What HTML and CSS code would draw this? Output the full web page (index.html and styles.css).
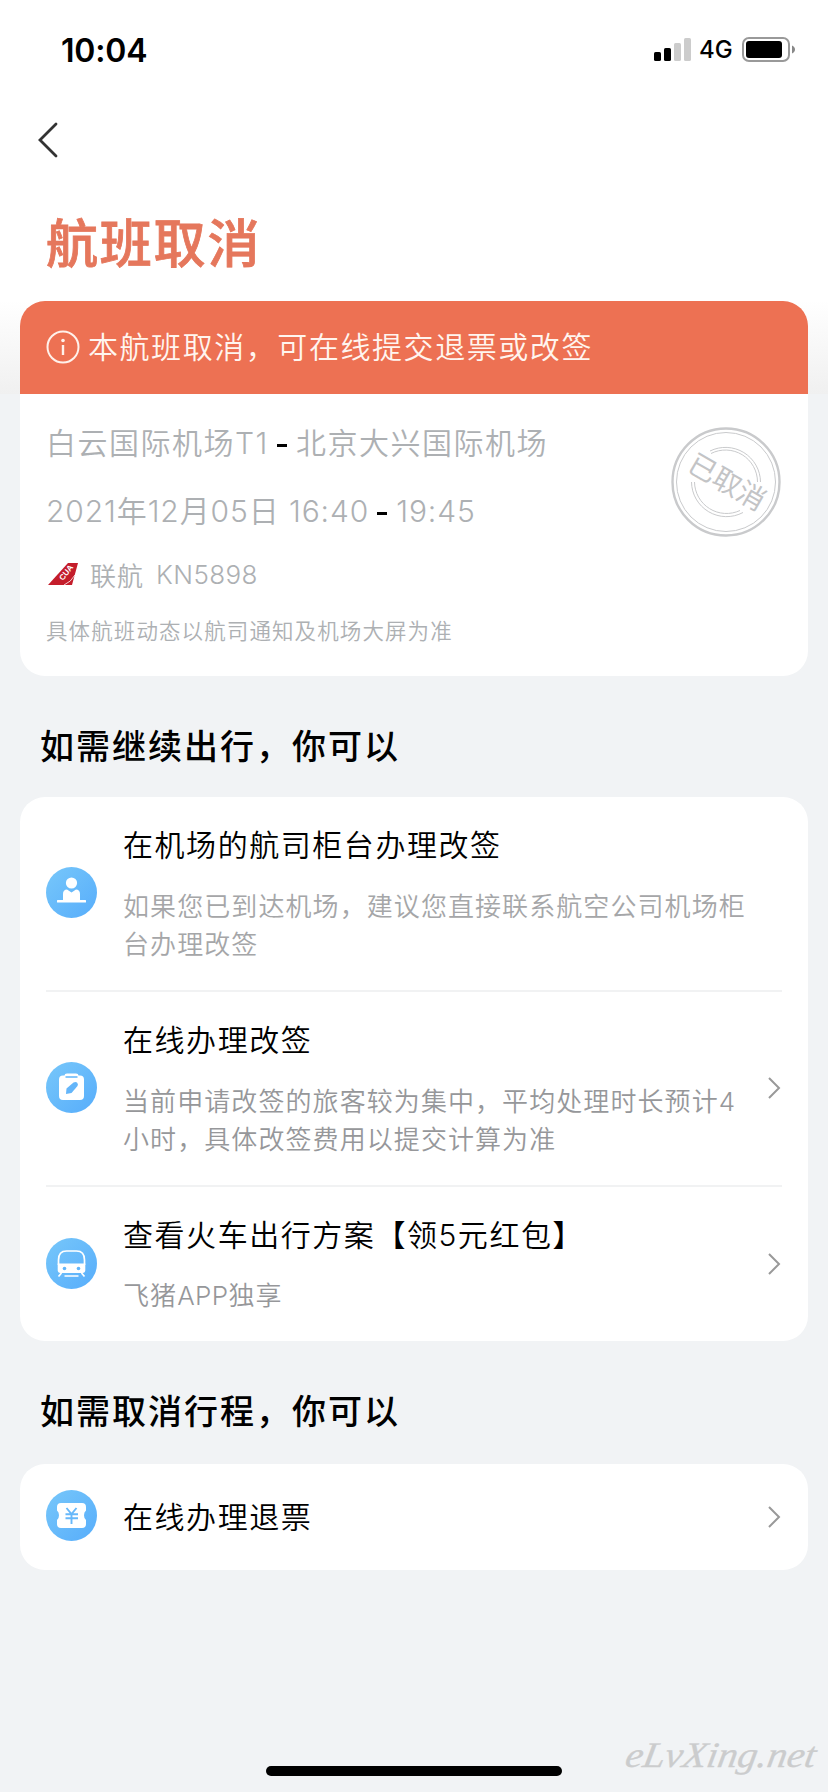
FILE: index.html
```html
<!DOCTYPE html>
<html lang="zh-CN">
<head>
<meta charset="utf-8">
<title>航班取消</title>
<link rel="stylesheet" href="styles.css">
</head>
<body>
<svg class="defs" width="0" height="0" aria-hidden="true">
  <defs>
    <linearGradient id="sky" x1="0" y1="0" x2="1" y2="1">
      <stop offset="0" stop-color="#77c7fa"/><stop offset="1" stop-color="#57adfb"/>
    </linearGradient>
    <symbol id="chevron" viewBox="0 0 14 24"><path d="M2 2 L12 12 L2 22" fill="none" stroke="#999" stroke-width="2"/></symbol>
  </defs>
</svg>
<div class="screen">
  <header class="top">
    <div class="status">
      <span class="clock">10:04</span>
      <div class="status-right">
        <svg class="signal" width="37" height="23" viewBox="0 0 37 23">
          <rect x="0" y="14" width="7" height="9" rx="1.6"/><rect x="10" y="10" width="7" height="13" rx="1.6"/>
          <g fill="#ccc"><rect x="20" y="5" width="7" height="18" rx="1.6"/><rect x="30" y="0" width="7" height="23" rx="1.6"/></g>
        </svg>
        <span class="network">4G</span>
        <svg class="battery" width="53" height="25" viewBox="0 0 53 25">
          <rect x="1" y="1" width="46" height="23" rx="6" fill="none" stroke="#999" stroke-width="2"/>
          <rect x="4" y="4" width="36" height="17" rx="3"/>
          <path d="M50 8.500c4 1.500 4 6.500 0 8z" fill="#888"/>
        </svg>
      </div>
    </div>
    <nav class="nav">
      <svg width="22" height="38" viewBox="0 0 22 38"><path d="M19 3 L3 19 L19 35" fill="none" stroke="#333" stroke-width="2.800" stroke-linecap="round"/></svg>
    </nav>
    <h1 class="page-title">航班取消</h1>
  </header>

  <main class="content">
    <section class="card flight">
      <div class="banner">
        <svg width="34" height="34" viewBox="0 0 34 34"><circle cx="17" cy="17" r="15.500" fill="none" stroke="#fff1eb" stroke-width="2"/><circle cx="17" cy="10.500" r="1.800" fill="#fff1eb"/><path d="M17 15v10" stroke="#fff1eb" stroke-width="2.400"/></svg>
        <span>本航班取消，可在线提交退票或改签</span>
      </div>
      <div class="flight-body">
        <div class="flight-info">
          <p class="route">白云国际机场T1<b class="dash"></b>北京大兴国际机场</p>
          <p class="time">2021年12月05日 <span>16:40</span><b class="dash"></b><span>19:45</span></p>
          <p class="carrier">
            <svg width="32" height="24" viewBox="0 0 32 24"><path d="M2 23L22 1H32L26 23Z" fill="#c41d2b"/><path d="M18 23Q25 20 29 13" fill="none" stroke="#fff" stroke-width=".8"/><text class="logo-text" x="0" y="0" transform="translate(17 19) rotate(-52)">CUA</text></svg>
            <span class="airline">联航</span><span class="number">KN5898</span>
          </p>
          <p class="note">具体航班动态以航司通知及机场大屏为准</p>
        </div>
        <svg class="stamp" width="110" height="110" viewBox="-55 -55 110 110">
          <g fill="none" stroke="#c9cacc">
            <circle r="53.500" stroke-width="2.400"/><circle r="49.500" stroke-width="1"/>
            <path d="M-16 -31A35 35 0 0 1 34.500 0M-15 -28.500A32 32 0 0 1 31.500 0M-34.500 0A35 35 0 0 0 17 30.500M-31.500 0A32 32 0 0 0 14 28.500" stroke-width="1"/>
          </g>
          <text class="stamp-text" transform="translate(1 0) rotate(30)" x="0" y="10" text-anchor="middle">已取消</text>
        </svg>
      </div>
    </section>

    <h2 class="section-title">如需继续出行，你可以</h2>
    <section class="card">
      <div class="item">
        <svg class="icon" viewBox="0 0 51 51"><circle cx="25.500" cy="25.500" r="25.500" fill="url(#sky)"/><g fill="#fff"><circle cx="25.500" cy="16" r="5.600"/><path d="M17 33v-6c0-3 1.500-4.500 4-4.500l4.500 3 4.500-3c2.500 0 4 1.500 4 4.500v6z"/><rect x="11" y="33" width="29" height="2.500" rx=".6"/></g></svg>
        <div class="item-text"><h3>在机场的航司柜台办理改签</h3><p class="first">如果您已到达机场，建议您直接联系航空公司机场柜台办理改签</p></div>
      </div>
      <div class="item">
        <svg class="icon" viewBox="0 0 51 51"><circle cx="25.500" cy="25.500" r="25.500" fill="url(#sky)"/><path d="M17 13.500h1.500q0-2 2.500-2h9q2.500 0 2.500 2H34q4 0 4 4V34q0 4-4 4H17q-4 0-4-4V17.500q0-4 4-4z" fill="#fff"/><path d="M19.500 15h12" stroke="#68b9fa" stroke-width="1.600"/><path d="M20 32l.5-5.500L27.500 20.500q2-1 3.500 0 1.600 1.500.5 3.500L25.500 31z" fill="#64b6fa"/></svg>
        <div class="item-text"><h3>在线办理改签</h3><p>当前申请改签的旅客较为集中，平均处理时长预计4<br>小时，具体改签费用以提交计算为准</p></div>
        <svg class="arrow"><use href="#chevron"/></svg>
      </div>
      <div class="item last">
        <svg class="icon" viewBox="0 0 51 51"><circle cx="25.500" cy="25.500" r="25.500" fill="url(#sky)"/><path d="M12.500 27V22q0-9 8-9h10q8 0 8 9v5" fill="none" stroke="#fff" stroke-width="1.700"/><path d="M11.700 25.500H39.300V32q0 3-3 3H14.700q-3 0-3-3z" fill="#fff"/><g fill="#62b5fa"><circle cx="18.500" cy="30.500" r="1.800"/><circle cx="32.500" cy="30.500" r="1.800"/></g><path d="M15.500 35l-3 3.500M35.500 35l3 3.500M18.500 38h14" fill="none" stroke="#fff" stroke-width="1.700"/></svg>
        <div class="item-text short"><h3>查看火车出行方案【领5元红包】</h3><p>飞猪<span class="latin">APP</span>独享</p></div>
        <svg class="arrow"><use href="#chevron"/></svg>
      </div>
    </section>

    <h2 class="section-title second">如需取消行程，你可以</h2>
    <section class="card">
      <div class="item single">
        <svg class="icon" viewBox="0 0 51 51"><circle cx="25.500" cy="25.500" r="25.500" fill="url(#sky)"/><path d="M15 13H36q4 0 4 4v3.500q-2 1.500-2 4.800t2 4.800V34q0 4-4 4H15q-4 0-4-4v-3.900q2-1.500 2-4.800t-2-4.800V17q0-4 4-4z" fill="#fff"/><path d="M20.500 18l5 6 5-6M25.500 24v10M19.500 24.300h12.500M19.500 28.300h12.500" fill="none" stroke="#67b8fa" stroke-width="1.900"/></svg>
        <div class="item-text"><h3>在线办理退票</h3></div>
        <svg class="arrow"><use href="#chevron"/></svg>
      </div>
    </section>
  </main>
  <div class="home-indicator"></div>
  <svg class="watermark" width="206" height="54" viewBox="0 0 206 54"><text class="mark-text" transform="translate(4 34) skewX(-10)" x="0" y="0" textLength="190" lengthAdjust="spacingAndGlyphs">eLvXing.net</text></svg>
</div>
</body>
</html>
```

FILE: styles.css
```css
* { box-sizing: border-box; }
body, h1, h2, h3, p { margin: 0; }
body {
  background: #f1f3f5;
  color: #000;
  font-family: Inter, "Noto Sans CJK SC", sans-serif;
}
.defs { position: absolute; }
.screen {
  position: relative;
  width: 828px;
  height: 1792px;
  overflow: hidden;
  background: linear-gradient(#fff 300px, #f0f0f0 394px, #f1f3f5 394px);
}
svg { display: block; flex: none; }

.top { height: 301px; }
.status {
  height: 99px;
  padding: 0 33px 0 61px;
  display: flex;
  align-items: center;
  justify-content: space-between;
}
.clock { padding-top: 1px; font-size: 32px; font-weight: 600; letter-spacing: -0.2px; }
.status-right { display: flex; align-items: center; }
.network { width: 51px; padding: 1px 0 0 8px; font-size: 24px; font-weight: 500; line-height: 24px; }
.nav { height: 80px; padding: 22px 0 0 37px; }
.page-title {
  padding: 22px 0 0 46px;
  font: 500 52px/80px "Noto Sans CJK SC", sans-serif;
  letter-spacing: 1.8px;
  color: #e5775c;
  -webkit-text-stroke: 0.8px #e5775c;
}

.content { padding: 0 20px; }
.card { background: #fff; border-radius: 25px; overflow: hidden; }
.flight { height: 375px; }
.banner {
  height: 93px;
  padding: 0 0 1px 26px;
  display: flex;
  align-items: center;
  gap: 8px;
  background: #ed7153;
  color: #fff5ef;
  font-size: 30px;
  font-weight: 350;
  letter-spacing: 1.56px;
}
.banner span { padding-bottom: 4px; }
.flight-body {
  display: flex;
  justify-content: space-between;
  padding: 26px 27px 0 26px;
  color: #adb0b3;
  font-weight: 350;
}
.route, .time { font-size: 30px; line-height: 46px; letter-spacing: 1.5px; white-space: nowrap; }
.time { margin-top: 22px; letter-spacing: 0.9px; }
.dash { display: inline-block; width: 10px; height: 3px; margin: 0 9px 7px 8px; background: #000; }
.carrier { height: 40px; margin-top: 20px; display: flex; align-items: center; font-size: 26px; }
.airline { margin-left: 12px; letter-spacing: 1px; }
.number { margin-left: 12px; letter-spacing: .4px; }
.logo-text { font: 700 8px "Liberation Sans", sans-serif; fill: #fff; }
.note { margin-top: 20px; font-size: 21.5px; line-height: 34px; letter-spacing: 1.1px; }
.stamp { margin-top: 7px; }
.stamp-text { font: 400 28px "Noto Sans CJK SC", sans-serif; fill: #c3c4c6; }

.section-title {
  height: 121px;
  padding: 44px 0 0 20px;
  font: 500 34px/50px "Noto Sans CJK SC", sans-serif;
  letter-spacing: 2px;
}
.section-title.second { height: 123px; }
.item {
  margin: 0 26px;
  display: flex;
  align-items: center;
  border-bottom: 2px solid #f1f2f3;
}
.item:last-child { border: 0; }
.icon { width: 51px; height: 51px; margin-bottom: 2px; }
.item-text { flex: 1; padding: 26px 0 26px 26px; }
.item-text h3 { font-size: 30px; font-weight: 350; line-height: 44px; letter-spacing: 1.55px; }
.item-text p {
  width: 640px;
  margin: 21px -20px 0 0;
  font-size: 26px;
  font-weight: 350;
  line-height: 38px;
  letter-spacing: 1.08px;
  color: #96979a;
}
.item-text .first { color: #a5a6a8; }
.item-text.short { padding-bottom: 26px; }
.item-text.short p { margin-top: 20px; }
.latin { letter-spacing: 0.4px; }
.single { height: 106px; }
.single .icon { margin-bottom: 3px; }
.single .item-text { padding-top: 25px; }
.arrow { width: 14px; height: 24px; margin: 0 1px 1px 0; }

.home-indicator {
  position: absolute;
  left: 266px;
  top: 1766px;
  width: 296px;
  height: 10px;
  border-radius: 5px;
  background: #000;
}
.watermark { position: absolute; left: 620px; top: 1733px; }
.mark-text { font: italic 36px "Liberation Serif", serif; fill: #cbcccd; stroke: #cbcccd; stroke-width: .3px; }
```
